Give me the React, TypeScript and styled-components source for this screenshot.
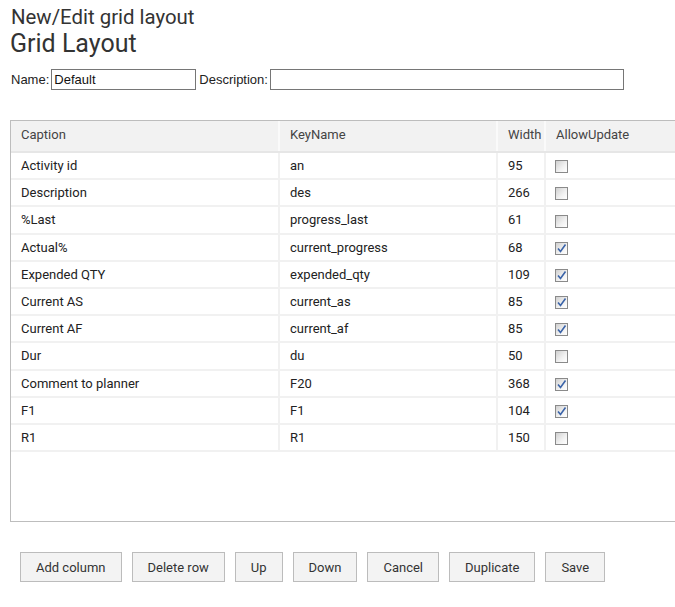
import React, { FC } from "react";
import styled, { createGlobalStyle } from "styled-components";

const GlobalStyle = createGlobalStyle`
  html, body {
    margin: 0;
    padding: 0;
    background: #fff;
    overflow: hidden;
  }
  body {
    font-family: Roboto, "Liberation Sans", sans-serif;
    color: #222;
  }
`;

type Column = {
  caption: string;
  keyName: string;
  width: number;
  allowUpdate: boolean;
};

const columns: Column[] = [
  { caption: "Activity id", keyName: "an", width: 95, allowUpdate: false },
  { caption: "Description", keyName: "des", width: 266, allowUpdate: false },
  { caption: "%Last", keyName: "progress_last", width: 61, allowUpdate: false },
  { caption: "Actual%", keyName: "current_progress", width: 68, allowUpdate: true },
  { caption: "Expended QTY", keyName: "expended_qty", width: 109, allowUpdate: true },
  { caption: "Current AS", keyName: "current_as", width: 85, allowUpdate: true },
  { caption: "Current AF", keyName: "current_af", width: 85, allowUpdate: true },
  { caption: "Dur", keyName: "du", width: 50, allowUpdate: false },
  { caption: "Comment to planner", keyName: "F20", width: 368, allowUpdate: true },
  { caption: "F1", keyName: "F1", width: 104, allowUpdate: true },
  { caption: "R1", keyName: "R1", width: 150, allowUpdate: false },
];

const Page = styled.div`
  padding: 6px 0 0 10px;
`;

const SubTitle = styled.div`
  font-size: 20.4px;
  line-height: 22px;
  color: #333;
  margin-left: 1px;
`;

const Title = styled.h1`
  margin: 1px 0 0;
  font-weight: 400;
  font-size: 25px;
  line-height: 30px;
  color: #333;
`;

const FormRow = styled.div`
  display: flex;
  align-items: center;
  margin-top: 10px;
  margin-left: 1px;
  font-family: "Liberation Sans", Arial, sans-serif;
  font-size: 13px;
  color: #222;
`;

const Label = styled.label`
  margin-right: 2px;
`;

const TextInput = styled.input<{ $w: number }>`
  box-sizing: border-box;
  width: ${(p) => p.$w}px;
  height: 21px;
  border: 1px solid #767676;
  padding: 1px 2px;
  margin-right: 3px;
  font-family: "Liberation Sans", Arial, sans-serif;
  font-size: 13px;
  color: #111;
  outline: none;
`;

const GridBox = styled.div`
  box-sizing: border-box;
  margin-top: 30px;
  width: 720px;
  height: 402px;
  border: 1px solid #bdbdbd;
  border-right: none;
`;

const Table = styled.table`
  border-collapse: collapse;
  width: 100%;
  table-layout: fixed;
  font-size: 13px;
`;

const HeadCell = styled.th<{ $w?: number }>`
  ${(p) => (p.$w ? `width: ${p.$w}px;` : "")}
  height: 31px;
  padding: 0 0 4px 10px;
  text-align: left;
  font-weight: 400;
  color: #444;
  background: #f2f2f2;
  border-right: 2px solid #fafafa;
  border-bottom: 2px solid #e6e6e6;
  box-sizing: border-box;
`;

const Cell = styled.td`
  height: 27.2px;
  padding: 0 0 0 10px;
  color: #222;
  border: 2px solid #f1f1f1;
  border-top: none;
  border-left: none;
  box-sizing: border-box;
  white-space: nowrap;
`;

const Box = styled.span<{ $checked: boolean }>`
  display: inline-flex;
  align-items: center;
  justify-content: center;
  box-sizing: border-box;
  width: 13px;
  height: 13px;
  margin-left: -1px;
  vertical-align: middle;
  border: 1px solid #8a8a8a;
  background: linear-gradient(135deg, #d0d0d0 0%, #f2f2f2 60%, #ffffff 100%);
`;

const ButtonBar = styled.div`
  display: flex;
  gap: 10px;
  margin-top: 30px;
  margin-left: 10px;
`;

const Button = styled.button`
  height: 30px;
  padding: 0 15px;
  background: #f3f3f3;
  border: 1px solid #bcbcbc;
  border-radius: 0;
  font-family: Roboto, "Liberation Sans", sans-serif;
  font-size: 13px;
  color: #333;
`;

const CheckMark: FC<{ checked: boolean }> = ({ checked }) => (
  <Box $checked={checked}>
    {checked && (
      <svg width="11" height="11" viewBox="0 0 11 11">
        <path d="M2 5.5 L4.5 8.5 L9.5 1.5" fill="none" stroke="#3a63a8" strokeWidth="1.6" />
      </svg>
    )}
  </Box>
);

const App: FC = () => {
  return (
    <Page>
      <GlobalStyle />
      <SubTitle>New/Edit grid layout</SubTitle>
      <Title>Grid Layout</Title>
      <FormRow>
        <Label>Name:</Label>
        <TextInput $w={145} defaultValue="Default" />
        <Label>Description:</Label>
        <TextInput $w={354} defaultValue="" />
      </FormRow>
      <GridBox>
        <Table>
          <thead>
            <tr>
              <HeadCell $w={268}>Caption</HeadCell>
              <HeadCell $w={218}>KeyName</HeadCell>
              <HeadCell $w={48}>Width</HeadCell>
              <HeadCell>AllowUpdate</HeadCell>
            </tr>
          </thead>
          <tbody>
            {columns.map((c) => (
              <tr key={c.caption}>
                <Cell>{c.caption}</Cell>
                <Cell>{c.keyName}</Cell>
                <Cell>{c.width}</Cell>
                <Cell>
                  <CheckMark checked={c.allowUpdate} />
                </Cell>
              </tr>
            ))}
          </tbody>
        </Table>
      </GridBox>
      <ButtonBar>
        <Button>Add column</Button>
        <Button>Delete row</Button>
        <Button>Up</Button>
        <Button>Down</Button>
        <Button>Cancel</Button>
        <Button>Duplicate</Button>
        <Button>Save</Button>
      </ButtonBar>
    </Page>
  );
};

export default App;
